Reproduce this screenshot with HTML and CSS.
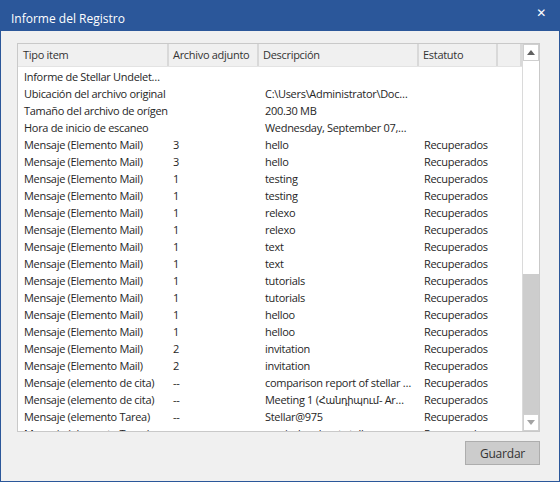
FILE: index.html
```html
<!DOCTYPE html>
<html lang="es">
<head>
	<meta charset="utf-8" />
	<title>Informe del Registro</title>
	<link rel="stylesheet" href="styles.css">
</head>
<body>
	<div class="window">
		<div class="titlebar">
			<span class="title">Informe del Registro</span>
			<span class="close">&#x2715;</span>
		</div>
		<div class="content">
			<div class="listbox">
				<div class="list">
					<div class="row head">
						<div class="c1">Tipo item</div>
						<div class="c2">Archivo adjunto</div>
						<div class="c3">Descripción</div>
						<div class="c4">Estatuto</div>
						<div class="c5"></div>
					</div>
					<div class="rows">
						<div class="row"><div class="c1">Informe de Stellar Undelet…</div><div class="c2"></div><div class="c3"></div><div class="c4"></div></div>
						<div class="row"><div class="c1">Ubicación del archivo original</div><div class="c2"></div><div class="c3">C:\Users\Administrator\Doc…</div><div class="c4"></div></div>
						<div class="row"><div class="c1">Tamaño del archivo de orígen</div><div class="c2"></div><div class="c3">200.30 MB</div><div class="c4"></div></div>
						<div class="row"><div class="c1">Hora de inicio de escaneo</div><div class="c2"></div><div class="c3">Wednesday, September 07,…</div><div class="c4"></div></div>
						<div class="row"><div class="c1">Mensaje (Elemento Mail)</div><div class="c2">3</div><div class="c3">hello</div><div class="c4">Recuperados</div></div>
						<div class="row"><div class="c1">Mensaje (Elemento Mail)</div><div class="c2">3</div><div class="c3">hello</div><div class="c4">Recuperados</div></div>
						<div class="row"><div class="c1">Mensaje (Elemento Mail)</div><div class="c2">1</div><div class="c3">testing</div><div class="c4">Recuperados</div></div>
						<div class="row"><div class="c1">Mensaje (Elemento Mail)</div><div class="c2">1</div><div class="c3">testing</div><div class="c4">Recuperados</div></div>
						<div class="row"><div class="c1">Mensaje (Elemento Mail)</div><div class="c2">1</div><div class="c3">relexo</div><div class="c4">Recuperados</div></div>
						<div class="row"><div class="c1">Mensaje (Elemento Mail)</div><div class="c2">1</div><div class="c3">relexo</div><div class="c4">Recuperados</div></div>
						<div class="row"><div class="c1">Mensaje (Elemento Mail)</div><div class="c2">1</div><div class="c3">text</div><div class="c4">Recuperados</div></div>
						<div class="row"><div class="c1">Mensaje (Elemento Mail)</div><div class="c2">1</div><div class="c3">text</div><div class="c4">Recuperados</div></div>
						<div class="row"><div class="c1">Mensaje (Elemento Mail)</div><div class="c2">1</div><div class="c3">tutorials</div><div class="c4">Recuperados</div></div>
						<div class="row"><div class="c1">Mensaje (Elemento Mail)</div><div class="c2">1</div><div class="c3">tutorials</div><div class="c4">Recuperados</div></div>
						<div class="row"><div class="c1">Mensaje (Elemento Mail)</div><div class="c2">1</div><div class="c3">helloo</div><div class="c4">Recuperados</div></div>
						<div class="row"><div class="c1">Mensaje (Elemento Mail)</div><div class="c2">1</div><div class="c3">helloo</div><div class="c4">Recuperados</div></div>
						<div class="row"><div class="c1">Mensaje (Elemento Mail)</div><div class="c2">2</div><div class="c3">invitation</div><div class="c4">Recuperados</div></div>
						<div class="row"><div class="c1">Mensaje (Elemento Mail)</div><div class="c2">2</div><div class="c3">invitation</div><div class="c4">Recuperados</div></div>
						<div class="row"><div class="c1">Mensaje (elemento de cita)</div><div class="c2">--</div><div class="c3">comparison report of stellar …</div><div class="c4">Recuperados</div></div>
						<div class="row"><div class="c1">Mensaje (elemento de cita)</div><div class="c2">--</div><div class="c3">Meeting 1 (<span class="arm">Հանդիպում</span>- Ar…</div><div class="c4">Recuperados</div></div>
						<div class="row"><div class="c1">Mensaje (elemento Tarea)</div><div class="c2">--</div><div class="c3">Stellar@975</div><div class="c4">Recuperados</div></div>
						<div class="row"><div class="c1">Mensaje (elemento Tarea)</div><div class="c2">--</div><div class="c3">reminder about stellar …</div><div class="c4">Recuperados</div></div>
					</div>
				</div>
				<div class="scrollbar">
					<div class="arrow up"><span></span></div>
					<div class="track"><div class="thumb"></div></div>
					<div class="arrow down"><span></span></div>
				</div>
			</div>
			<div class="actions">
				<button class="btn">Guardar</button>
			</div>
		</div>
	</div>
</body>
</html>
```

FILE: styles.css
```css
html, body {margin:0; padding:0;}
body {width:560px; height:482px; overflow:hidden; font-family:"Open Sans","DejaVu Sans",sans-serif; font-size:11px; letter-spacing:-0.3px; color:#262626; background:#f0f0f0;}

.window {box-sizing:border-box; width:560px; height:482px; border:1px solid #2b579a; border-top:0; display:flex; flex-direction:column; background:#f0f0f0;}

.titlebar {height:31px; flex:none; display:flex; align-items:center; justify-content:space-between; background:#2b579a; color:#fff; padding:0 14px 0 11px; margin:0 -1px;}
.title {font-size:12px; letter-spacing:0; padding-top:6px;}
.close {font-size:12px; font-weight:bold; margin-top:-6px;}

.content {flex:1; display:flex; flex-direction:column; padding:12px 18px 0 16px;}

.listbox {display:flex; width:523px; height:389px; box-sizing:border-box; border:1px solid #c9c9c9; background:#fff; overflow:hidden;}
.list {flex:1; overflow:hidden;}

.row {display:flex; height:17px; line-height:17px; white-space:nowrap;}
.row > div {overflow:hidden; box-sizing:border-box;}
.c1 {width:151px; padding-left:6px;}
.c2 {width:90px; padding-left:4px;}
.c3 {width:160px; padding-left:6px;}
.c4 {width:79px; padding-left:5px;}
.c5 {width:24px;}
.arm {font-size:10px;}

.head {height:23px; line-height:22px; background:#f0f0f0; color:#333; border-bottom:1px solid #e3e3e3; box-sizing:border-box;}
.head > div {border-right:2px solid #d9d9d9;}
.head .c2, .head .c3, .head .c4 {padding-left:4px;}
.head .c1 {padding-left:5px;}

.rows {padding-top:1px;}

.scrollbar {width:17px; flex:none; display:flex; flex-direction:column; background:#fff; border-left:1px solid #dadada; box-sizing:border-box;}
.arrow {height:17px; flex:none; box-sizing:border-box; border:1px solid #cfcfcf; background:#fff; display:flex; align-items:center; justify-content:center;}
.arrow span {width:0; height:0; border-left:4px solid transparent; border-right:4px solid transparent;}
.arrow.up span {border-bottom:5px solid #606060;}
.arrow.down span {border-top:5px solid #a3a3a3;}
.track {flex:1; display:flex; flex-direction:column; justify-content:flex-end;}
.thumb {height:140px; background:#cdcdcd;}

.actions {display:flex; justify-content:flex-end; padding-top:9px; padding-right:1px;}
.btn {width:75px; height:24px; box-sizing:border-box; border:1px solid #adadad; background:#cccccc; color:#333; font-family:"Open Sans","DejaVu Sans",sans-serif; font-size:12px; letter-spacing:-0.2px; padding:0;}
```
